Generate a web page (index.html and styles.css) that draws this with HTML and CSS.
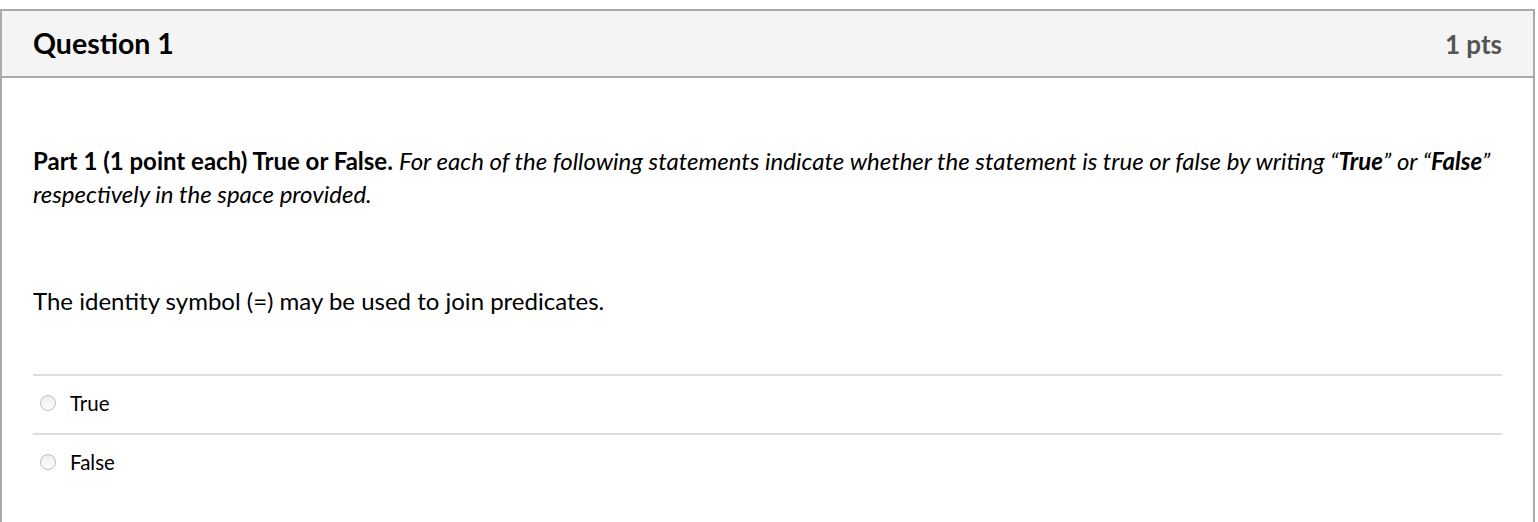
FILE: index.html
```html
<!DOCTYPE html>
<html>
<head>
<meta charset="utf-8">
<link rel="stylesheet" href="styles.css">
</head>
<body>
<div class="question">
  <div class="q-header">
    <h2 class="q-title">Question 1</h2>
    <span class="q-pts">1 pts</span>
  </div>
  <div class="q-body">
    <p class="q-intro"><strong>Part 1 (1 point each) True or False.</strong> <em>For each of the following statements indicate whether the statement is true or false by writing “<strong>True</strong>” or “<strong>False</strong>” respectively in the space provided.</em></p>
    <p class="q-stmt">The identity symbol (=) may be used to join predicates.</p>
    <div class="answers">
      <label class="answer"><span class="radio"></span><span class="a-text">True</span></label>
      <label class="answer"><span class="radio"></span><span class="a-text">False</span></label>
    </div>
  </div>
</div>
</body>
</html>
```
FILE: styles.css
```css
html, body {
  margin: 0;
  padding: 0;
  background: #fff;
}
body {
  font-family: Lato, "Liberation Sans", sans-serif;
  color: #000;
}
.question {
  margin-top: 9px;
  width: 1535px;
  box-sizing: border-box;
  border: 2px solid #aaa;
  border-bottom: none;
  height: 520px;
}
.q-header {
  display: flex;
  align-items: center;
  justify-content: space-between;
  height: 65px;
  background: #f4f4f4;
  border-bottom: 2px solid #aaa;
  padding: 0 31px 0 31px;
}
.q-title {
  margin: 0;
  font-size: 28.5px;
  font-weight: 700;
  line-height: 1;
}
.q-pts {
  font-size: 26px;
  font-weight: 700;
  color: #555;
  line-height: 1;
}
.q-body {
  padding: 0 31px;
}
.q-intro {
  margin: 66px 0 0;
  font-size: 24px;
  line-height: 33px;
}
.q-stmt {
  margin: 76px 0 0;
  font-size: 24px;
  line-height: 30px;
}
.answers {
  margin-top: 58px;
}
.answer {
  display: flex;
  align-items: center;
  height: 53px;
  border-top: 2px solid #ddd;
  padding: 0 0 4px 7px;
}
.radio {
  width: 16px;
  height: 16px;
  box-sizing: border-box;
  border-radius: 50%;
  border: 1px solid #bdbdbd;
  background: linear-gradient(#eee, #fff);
  margin-right: 14px;
}
.a-text {
  font-size: 20.5px;
}
```
